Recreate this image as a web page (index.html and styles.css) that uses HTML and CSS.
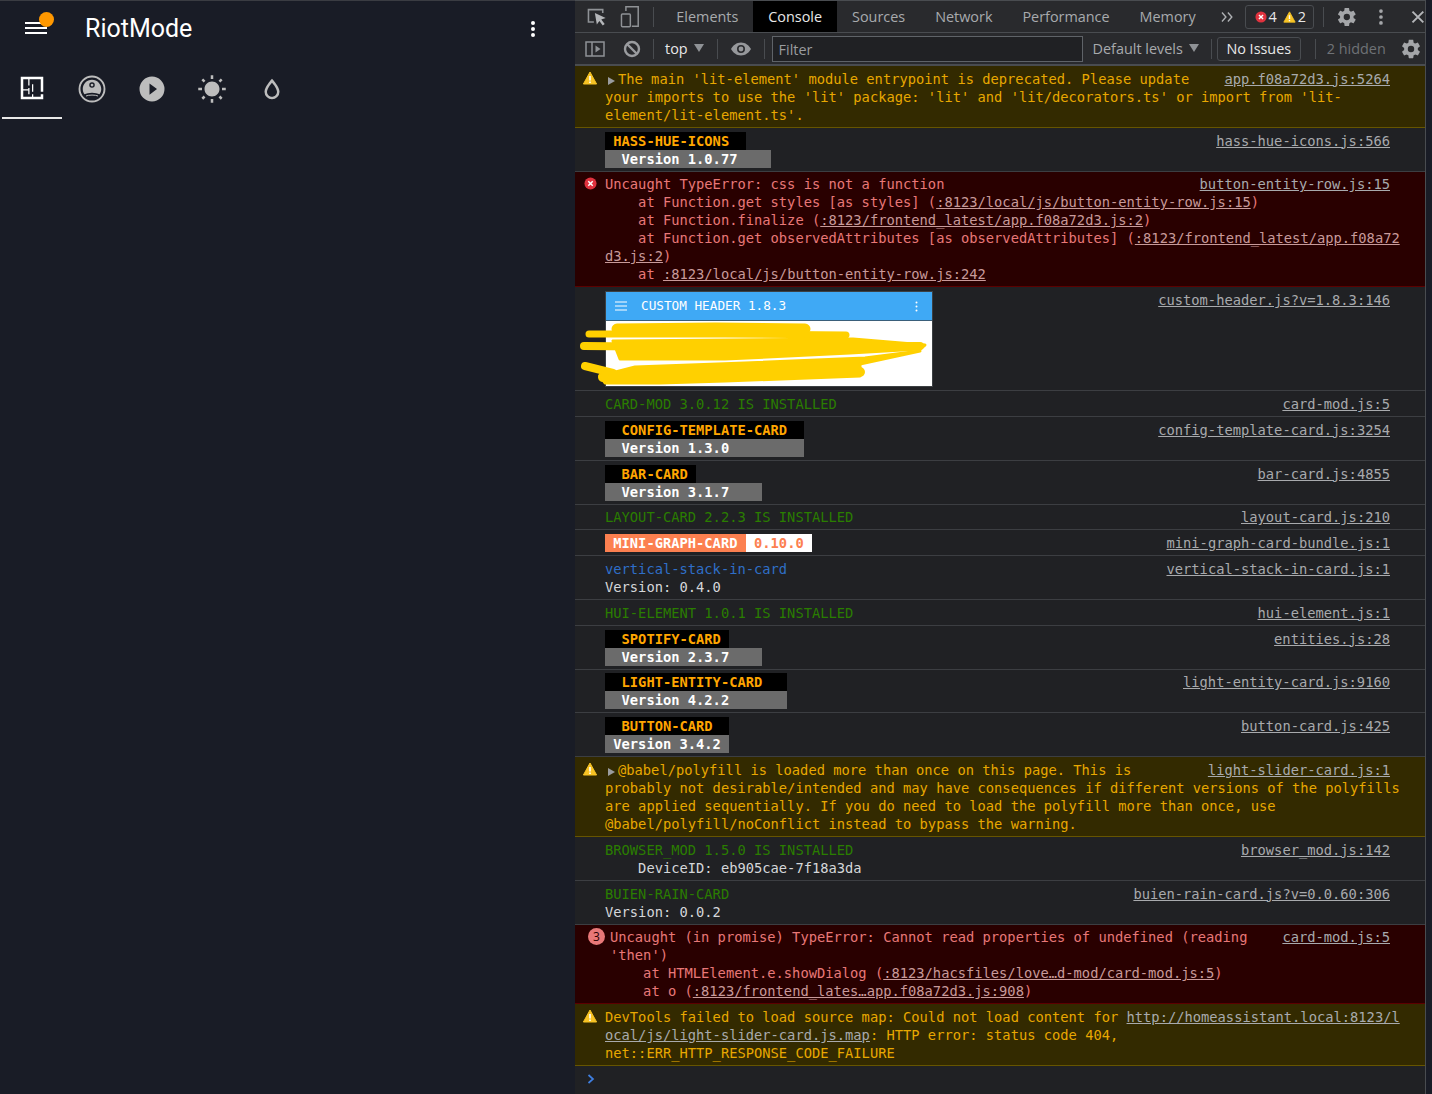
FILE: index.html
```html
<!DOCTYPE html>
<html lang="en">
<head>
	<meta charset="UTF-8">
	<title>RiotMode</title>
	<link rel="stylesheet" href="styles.css">
</head>
<body>
<svg class="defs" width="0" height="0">
	<symbol id="cog" viewBox="0 0 24 24"><path d="M12,15.5A3.5,3.5 0 0,1 8.5,12A3.5,3.5 0 0,1 12,8.5A3.5,3.5 0 0,1 15.5,12A3.5,3.5 0 0,1 12,15.5M19.43,12.97C19.47,12.65 19.5,12.33 19.5,12C19.5,11.67 19.47,11.34 19.43,11L21.54,9.37C21.73,9.22 21.78,8.95 21.66,8.73L19.66,5.27C19.54,5.05 19.27,4.96 19.05,5.05L16.56,6.05C16.04,5.66 15.5,5.32 14.87,5.07L14.5,2.42C14.46,2.18 14.25,2 14,2H10C9.75,2 9.54,2.18 9.5,2.42L9.13,5.07C8.5,5.32 7.96,5.66 7.44,6.05L4.95,5.05C4.73,4.96 4.46,5.05 4.34,5.27L2.34,8.73C2.21,8.95 2.27,9.22 2.46,9.37L4.57,11C4.53,11.34 4.5,11.67 4.5,12C4.5,12.33 4.53,12.65 4.57,12.97L2.46,14.63C2.27,14.78 2.21,15.05 2.34,15.27L4.34,18.73C4.46,18.95 4.73,19.03 4.95,18.95L7.44,17.94C7.96,18.34 8.5,18.68 9.13,18.93L9.5,21.58C9.54,21.82 9.75,22 10,22H14C14.25,22 14.46,21.82 14.5,21.58L14.87,18.93C15.5,18.67 16.04,18.34 16.56,17.94L19.05,18.95C19.27,19.03 19.54,18.95 19.66,18.73L21.66,15.27C21.78,15.05 21.73,14.78 21.54,14.63L19.43,12.97Z"/></symbol>
	<symbol id="warn" viewBox="0 0 14 14"><path d="M7,1 L13.6,13 H0.4 Z" fill="#f7c325" stroke="#f7c325" stroke-linejoin="round"/><path d="M6.2,5 H7.8 V9.4 H6.2 Z M6.2,10.4 H7.8 V12 H6.2 Z" fill="#fff"/></symbol>
	<symbol id="err" viewBox="0 0 14 14"><circle cx="7" cy="7" r="6.5" fill="#e0323e"/><path d="M4.6,4.6 L9.4,9.4 M9.4,4.6 L4.6,9.4" stroke="#fff" stroke-width="1.6"/></symbol>
</svg>

<div class="app">
	<div class="appbar">
		<div class="menu">
			<svg width="24" height="18" viewBox="0 0 24 18"><path d="M1,6 H23 M1,11 H23 M1,16 H23" stroke="#fff" stroke-width="2.2"/></svg>
			<span class="dot"></span>
		</div>
		<div class="title">RiotMode</div>
		<svg class="more" width="24" height="24" viewBox="0 0 24 24"><path fill="#fff" d="M12,16A2,2 0 0,1 14,18A2,2 0 0,1 12,20A2,2 0 0,1 10,18A2,2 0 0,1 12,16M12,10A2,2 0 0,1 14,12A2,2 0 0,1 12,14A2,2 0 0,1 10,12A2,2 0 0,1 12,10M12,4A2,2 0 0,1 14,6A2,2 0 0,1 12,8A2,2 0 0,1 10,6A2,2 0 0,1 12,4Z"/></svg>
	</div>
	<div class="viewtabs">
		<div class="viewtab active"><svg width="30" height="30" viewBox="0 0 24 24"><path fill="#fff" d="M10,5V10H9V5H5V13H9V12H10V17H9V14H5V19H12V17H13V19H19V17H21V21H3V3H21V15H19V10H13V15H12V9H13V10H19V5H10Z"/></svg></div>
		<div class="viewtab"><svg width="30" height="30" viewBox="0 0 24 24"><circle cx="12" cy="12" r="10" fill="none" stroke="#bdbdbd" stroke-width="1.5"/><path fill="#bdbdbd" fill-rule="evenodd" d="M12,4.6C16.2,4.6 19.4,8 19.4,12C19.4,13.6 18.8,15.2 18,16.2C16.6,15.6 14.5,15 12,15C9.5,15 7.4,15.6 6,16.2C5.2,15.2 4.6,13.6 4.6,12C4.6,8 7.8,4.6 12,4.6ZM12,6.6A2.2,2.2 0 0 0 9.8,8.8A2.2,2.2 0 0 0 12,11A2.2,2.2 0 0 0 14.2,8.8A2.2,2.2 0 0 0 12,6.6Z"/><circle cx="12" cy="8.8" r="1.1" fill="#bdbdbd"/><path d="M7.2,17.6C9.4,16.6 14.6,16.6 16.8,17.6" stroke="#bdbdbd" stroke-width="0.8" fill="none"/></svg></div>
		<div class="viewtab"><svg width="30" height="30" viewBox="0 0 24 24"><path fill="#bdbdbd" d="M10,16.5V7.5L16,12M12,2A10,10 0 0,0 2,12A10,10 0 0,0 12,22A10,10 0 0,0 22,12A10,10 0 0,0 12,2Z"/></svg></div>
		<div class="viewtab"><svg width="30" height="30" viewBox="0 0 24 24"><path fill="#bdbdbd" d="M3.55 19.09L4.96 20.5L6.76 18.71L5.34 17.29M12 6C8.69 6 6 8.69 6 12S8.69 18 12 18 18 15.31 18 12C18 8.68 15.31 6 12 6M20 13H23V11H20M17.24 18.71L19.04 20.5L20.45 19.09L18.66 17.29M20.45 5L19.04 3.6L17.24 5.39L18.66 6.81M13 1H11V4H13M6.76 5.39L4.96 3.6L3.55 5L5.34 6.81L6.76 5.39M1 11V13H4V11M13 20H11V23H13"/></svg></div>
		<div class="viewtab"><svg width="30" height="30" viewBox="0 0 24 24"><path fill="#bdbdbd" d="M12,3.77L11.25,4.61C11.25,4.61 9.97,6.06 8.68,7.94C7.39,9.82 6,12.07 6,14.23A6,6 0 0,0 12,20.23A6,6 0 0,0 18,14.23C18,12.07 16.61,9.82 15.32,7.94C14.03,6.06 12.75,4.61 12.75,4.61L12,3.77M12,6.9C12.44,7.42 12.84,7.85 13.68,9.07C14.89,10.83 16,13.07 16,14.23C16,16.45 14.22,18.23 12,18.23C9.78,18.23 8,16.45 8,14.23C8,13.07 9.11,10.83 10.32,9.07C11.16,7.85 11.56,7.42 12,6.9Z"/></svg></div>
	</div>
</div>

<div class="devtools">
	<div class="toolbar top-bar">
		<svg class="tool-inspect" width="22" height="20" viewBox="0 0 22 20"><path d="M8,15 H2.5 V2.5 H17 V6" fill="none" stroke="#8f9296" stroke-width="1.6"/><path d="M9,6 L20,11 L15.5,12.6 L19,17 L17,18.6 L13.6,14 L11,17.6 Z" fill="#b4b6b9"/></svg>
		<svg class="tool-device" width="20" height="24" viewBox="0 0 20 24"><path d="M6,6 V1.5 H18.5 V21.5 H12" fill="none" stroke="#8f9296" stroke-width="1.5"/><rect x="1.5" y="9" width="9" height="13" rx="1" fill="none" stroke="#8f9296" stroke-width="1.5"/></svg>
		<span class="sep sep-tabs"></span>
		<div class="tab">Elements</div>
		<div class="tab selected">Console</div>
		<div class="tab">Sources</div>
		<div class="tab">Network</div>
		<div class="tab">Performance</div>
		<div class="tab">Memory</div>
		<svg class="chevrons" width="12" height="10" viewBox="0 0 12 10"><path d="M1,0.5 L5,5 L1,9.5 M7,0.5 L11,5 L7,9.5" fill="none" stroke="#aeb0b3" stroke-width="1.4"/></svg>
		<div class="counts">
			<svg width="12" height="12"><use href="#err"/></svg><span>4</span>
			<svg class="count-warn" width="13" height="12"><use href="#warn"/></svg><span>2</span>
		</div>
		<span class="sep sep-count"></span>
		<svg class="gear gear-main" width="22" height="22"><use href="#cog"/></svg>
		<svg class="kebab" width="4" height="18" viewBox="0 0 4 18"><circle cx="2" cy="3" r="1.9"/><circle cx="2" cy="9" r="1.9"/><circle cx="2" cy="15" r="1.9"/></svg>
		<svg class="close" width="14" height="14" viewBox="0 0 14 14"><path d="M1.5,1.5 L12.5,12.5 M12.5,1.5 L1.5,12.5" stroke="#b4b6b9" stroke-width="2"/></svg>
	</div>
	<div class="toolbar filter-bar">
		<svg class="tool-dock" width="20" height="18" viewBox="0 0 20 18"><rect x="1" y="2" width="18" height="14" fill="none" stroke="#8f9296" stroke-width="1.5"/><path d="M7,2 V16" stroke="#8f9296" stroke-width="1.5"/><path d="M10.5,5.5 L15.5,9 L10.5,12.5 Z" fill="#8f9296"/></svg>
		<svg class="tool-block" width="18" height="18" viewBox="0 0 18 18"><circle cx="9" cy="9" r="7" fill="none" stroke="#9a9c9f" stroke-width="2.4"/><path d="M4,4 L14,14" stroke="#9a9c9f" stroke-width="2.4"/></svg>
		<span class="sep sep-block"></span>
		<span class="ctx">top</span>
		<span class="caret caret-top"></span>
		<span class="sep sep-ctx"></span>
		<svg class="tool-eye" width="20" height="14" viewBox="0 0 20 14"><path fill="#96989b" fill-rule="evenodd" d="M10,0.5C14.5,0.5 18,3.4 20,7C18,10.6 14.5,13.5 10,13.5C5.5,13.5 2,10.6 0,7C2,3.4 5.5,0.5 10,0.5ZM10,3A4,4 0 1 0 10,11A4,4 0 1 0 10,3Z"/><circle cx="10" cy="7" r="2.4" fill="#96989b"/></svg>
		<span class="sep sep-eye"></span>
		<div class="filter">Filter</div>
		<span class="levels">Default levels</span>
		<span class="caret caret-levels"></span>
		<span class="sep sep-levels"></span>
		<div class="issues">No Issues</div>
		<span class="sep sep-issues"></span>
		<span class="hidden-count">2 hidden</span>
		<svg class="gear gear-filter" width="22" height="22"><use href="#cog"/></svg>
	</div>

	<div class="console">
		<div class="row warning">
			<div class="ico"><svg class="ico-warn" width="14" height="14"><use href="#warn"/></svg></div>
			<div class="msg"><a class="src">app.f08a72d3.js:5264</a><span class="arrow"></span>The main 'lit-element' module entrypoint is deprecated. Please update
your imports to use the 'lit' package: 'lit' and 'lit/decorators.ts' or import from 'lit-
element/lit-element.ts'.</div>
		</div>
		<div class="row">
			<div class="ico"></div>
			<div class="msg"><a class="src">hass-hue-icons.js:566</a><span class="badge name"> HASS-HUE-ICONS  </span>
<span class="badge ver">  Version 1.0.77    </span></div>
		</div>
		<div class="row error">
			<div class="ico"><svg class="ico-err" width="13" height="13"><use href="#err"/></svg></div>
			<div class="msg"><a class="src">button-entity-row.js:15</a>Uncaught TypeError: css is not a function
    at Function.get styles [as styles] (<u>:8123/local/js/button-entity-row.js:15</u>)
    at Function.finalize (<u>:8123/frontend_latest/app.f08a72d3.js:2</u>)
    at Function.get observedAttributes [as observedAttributes] (<u>:8123/frontend_latest/app.f08a72
d3.js:2</u>)
    at <u>:8123/local/js/button-entity-row.js:242</u></div>
		</div>
		<div class="row row-image">
			<div class="ico"></div>
			<div class="msg"><a class="src">custom-header.js?v=1.8.3:146</a><div class="shot">
				<div class="shot-head">
					<svg width="12" height="10" viewBox="0 0 12 10"><path d="M0,1 H12 M0,5 H12 M0,9 H12" stroke="#fff" stroke-width="1.2"/></svg>
					<span class="shot-title">CUSTOM HEADER 1.8.3</span>
					<svg class="shot-more" width="3" height="11" viewBox="0 0 3 11"><circle cx="1.5" cy="1.5" r="1" fill="#fff"/><circle cx="1.5" cy="5.5" r="1" fill="#fff"/><circle cx="1.5" cy="9.5" r="1" fill="#fff"/></svg>
				</div>
				<div class="shot-body"></div>
				<svg class="scribble" width="360" height="70" viewBox="0 0 360 70">
					<path d="M42,10 L140,9 L230,10" stroke-width="11"/>
					<path d="M14,15 L150,15 L271,16" stroke-width="7"/>
					<path d="M9,27 L120,28 L345,27" stroke-width="8"/>
					<path class="fill" d="M38,22 L278,20 L350,26 L345,30 L275,34 L150,40 L45,40 Z"/>
					<path d="M10,47 L38,54" stroke-width="8"/>
					<path d="M28,58 L90,56 L285,53" stroke-width="10"/>
					<path class="fill" d="M60,48 L170,44 L290,39 L345,32 L285,45 L285,57 L150,62 L85,64 L30,64 L25,57 Z"/>
				</svg>
			</div></div>
		</div>
		<div class="row">
			<div class="ico"></div>
			<div class="msg green"><a class="src">card-mod.js:5</a>CARD-MOD 3.0.12 IS INSTALLED</div>
		</div>
		<div class="row">
			<div class="ico"></div>
			<div class="msg"><a class="src">config-template-card.js:3254</a><span class="badge name">  CONFIG-TEMPLATE-CARD  </span>
<span class="badge ver">  Version 1.3.0         </span></div>
		</div>
		<div class="row">
			<div class="ico"></div>
			<div class="msg"><a class="src">bar-card.js:4855</a><span class="badge name">  BAR-CARD </span>
<span class="badge ver">  Version 3.1.7    </span></div>
		</div>
		<div class="row">
			<div class="ico"></div>
			<div class="msg green"><a class="src">layout-card.js:210</a>LAYOUT-CARD 2.2.3 IS INSTALLED</div>
		</div>
		<div class="row">
			<div class="ico"></div>
			<div class="msg"><a class="src">mini-graph-card-bundle.js:1</a><span class="badge mini"> MINI-GRAPH-CARD </span><span class="badge mini-ver"> 0.10.0 </span></div>
		</div>
		<div class="row">
			<div class="ico"></div>
			<div class="msg"><a class="src">vertical-stack-in-card.js:1</a><b class="blue">vertical-stack-in-card</b>
Version: 0.4.0</div>
		</div>
		<div class="row">
			<div class="ico"></div>
			<div class="msg green"><a class="src">hui-element.js:1</a>HUI-ELEMENT 1.0.1 IS INSTALLED</div>
		</div>
		<div class="row">
			<div class="ico"></div>
			<div class="msg"><a class="src">entities.js:28</a><span class="badge name">  SPOTIFY-CARD </span>
<span class="badge ver">  Version 2.3.7    </span></div>
		</div>
		<div class="row">
			<div class="ico"></div>
			<div class="msg"><a class="src">light-entity-card.js:9160</a><span class="badge name">  LIGHT-ENTITY-CARD   </span>
<span class="badge ver">  Version 4.2.2       </span></div>
		</div>
		<div class="row">
			<div class="ico"></div>
			<div class="msg"><a class="src">button-card.js:425</a><span class="badge name">  BUTTON-CARD  </span>
<span class="badge ver"> Version 3.4.2 </span></div>
		</div>
		<div class="row warning">
			<div class="ico"><svg class="ico-warn" width="14" height="14"><use href="#warn"/></svg></div>
			<div class="msg"><a class="src">light-slider-card.js:1</a><span class="arrow"></span>@babel/polyfill is loaded more than once on this page. This is
probably not desirable/intended and may have consequences if different versions of the polyfills
are applied sequentially. If you do need to load the polyfill more than once, use
@babel/polyfill/noConflict instead to bypass the warning.</div>
		</div>
		<div class="row">
			<div class="ico"></div>
			<div class="msg"><a class="src">browser_mod.js:142</a><span class="green">BROWSER_MOD 1.5.0 IS INSTALLED</span>
    DeviceID: eb905cae-7f18a3da</div>
		</div>
		<div class="row">
			<div class="ico"></div>
			<div class="msg"><a class="src">buien-rain-card.js?v=0.0.60:306</a><span class="green">BUIEN-RAIN-CARD</span>
Version: 0.0.2</div>
		</div>
		<div class="row error">
			<div class="ico"><span class="repeat">3</span></div>
			<div class="msg msg-repeat"><a class="src">card-mod.js:5</a>Uncaught (in promise) TypeError: Cannot read properties of undefined (reading
'then')
    at HTMLElement.e.showDialog (<u>:8123/hacsfiles/love…d-mod/card-mod.js:5</u>)
    at o (<u>:8123/frontend_lates…app.f08a72d3.js:908</u>)</div>
		</div>
		<div class="row warning">
			<div class="ico"><svg class="ico-warn" width="14" height="14"><use href="#warn"/></svg></div>
			<div class="msg">DevTools failed to load source map: Could not load content for <u>http://homeassistant.local:8123/l
ocal/js/light-slider-card.js.map</u>: HTTP error: status code 404,
net::ERR_HTTP_RESPONSE_CODE_FAILURE</div>
		</div>
		<div class="prompt">
			<svg width="8" height="10" viewBox="0 0 8 10"><path d="M1.5,1 L6,5 L1.5,9" fill="none" stroke="#3f7fe0" stroke-width="1.7"/></svg>
		</div>
	</div>
</div>
</body>
</html>
```

FILE: styles.css
```css
html, body{
	margin:0;
	height:100%;
}
body{
	display:flex;
	align-items:stretch;
	height:1094px;
	overflow:hidden;
	background-color:#191c26;
	font-family:"Open Sans", sans-serif;
}
.defs{
	position:absolute;
}

/* left side, the home assistant panel */
.app{
	width:575px;
	flex:none;
	border-top:1px solid #3a3c42;
	box-sizing:border-box;
}
.appbar{
	display:flex;
	align-items:center;
	height:56px;
	padding-left:24px;
	color:#fff;
}
.menu{
	position:relative;
	width:24px;
	height:24px;
	margin-top:-1px;
}
.dot{
	position:absolute;
	top:-5px;
	left:15px;
	width:15px;
	height:15px;
	border-radius:50%;
	background-color:#ff9800;
}
.title{
	margin-left:37px;
	font-family:Roboto, sans-serif;
	font-size:25px;
	line-height:56px;
}
.more{
	margin-left:auto;
	margin-right:30px;
}
.viewtabs{
	display:flex;
	margin-left:2px;
	margin-top:3px;
}
.viewtab{
	width:60px;
	height:59px;
	display:flex;
	align-items:center;
	justify-content:center;
	box-sizing:border-box;
	padding-bottom:2px;
}
.viewtab.active{
	border-bottom:2px solid #e8e8e8;
}

/* devtools */
.devtools{
	width:851px;
	flex:none;
	background-color:#202124;
	border-right:1px solid #494c50;
	box-sizing:border-box;
	display:flex;
	flex-direction:column;
}
.toolbar{
	display:flex;
	align-items:center;
	background-color:#292a2d;
	border-bottom:1px solid #494c50;
	box-sizing:border-box;
	flex:none;
	color:#a8aaad;
	font-size:14.4px;
}
.top-bar{
	height:33px;
	border-top:1px solid #494c50;
}
.filter-bar{
	height:33px;
	border-bottom:2px solid #494c50;
}
.sep{
	width:1px;
	height:20px;
	background-color:#494c50;
	flex:none;
}
.tab{
	padding:0 15px;
	height:31px;
	line-height:31px;
}
.tab.selected{
	background-color:#000;
	color:#e8e8e8;
}
.tool-inspect{
	margin-left:11px;
}
.tool-device{
	margin-left:12px;
}
.sep-tabs{
	margin-left:14px;
	margin-right:7px;
}
.chevrons{
	margin-left:10px;
}
.counts{
	display:flex;
	align-items:center;
	width:70px;
	height:24px;
	margin-left:12px;
	box-sizing:border-box;
	border:1px solid #494c50;
	border-radius:3px;
	padding-left:9px;
	color:#e8e8e8;
}
.counts span{
	margin-left:2px;
}
.count-warn{
	margin-left:6px;
}
.sep-count{
	margin-left:9px;
}
.gear{
	fill:#a4a6a9;
}
.gear-main{
	margin-left:12px;
}
.kebab{
	margin-left:22px;
	fill:#a4a6a9;
}
.close{
	margin-left:28px;
}
.tool-dock{
	margin-left:10px;
}
.tool-block{
	margin-left:18px;
}
.sep-block{
	margin-left:12px;
}
.ctx{
	margin-left:11px;
	color:#e8e8e8;
}
.caret{
	width:0;
	height:0;
	border-left:5px solid transparent;
	border-right:5px solid transparent;
	border-top:8px solid #8f9296;
	margin-top:-2px;
}
.caret-top{
	margin-left:6px;
}
.sep-ctx{
	margin-left:13px;
}
.tool-eye{
	margin-left:13px;
}
.sep-eye{
	margin-left:13px;
}
.filter{
	width:311px;
	height:26px;
	line-height:26px;
	margin-left:7px;
	padding-left:6px;
	box-sizing:border-box;
	border:1px solid #5f6368;
	background-color:#202124;
	color:#9a9c9f;
}
.levels{
	margin-left:10px;
}
.caret-levels{
	margin-left:6px;
}
.sep-levels{
	margin-left:12px;
}
.issues{
	width:84px;
	height:24px;
	line-height:22px;
	margin-left:5px;
	box-sizing:border-box;
	text-align:center;
	border:1px solid #494c50;
	border-radius:3px;
	color:#e8e8e8;
}
.sep-issues{
	margin-left:14px;
}
.hidden-count{
	margin-left:11px;
	color:#6f7276;
}
.gear-filter{
	margin-left:14px;
}

.console{
	flex:1;
	font-family:"DejaVu Sans Mono", monospace;
	font-size:13.75px;
	line-height:18px;
	color:#d5d7da;
}
.row{
	display:flex;
	padding:3.8px 0 3px 0;
	border-bottom:1px solid #3c3e42;
}
.ico{
	width:30px;
	flex:none;
	position:relative;
}
.ico-warn{
	display:block;
	margin:1px 0 0 8px;
}
.ico-err{
	display:block;
	margin:2px 0 0 9px;
}
.msg{
	flex:1;
	white-space:pre;
	min-width:0;
}
.src{
	float:right;
	margin-right:35px;
	color:#a8aaad;
	text-decoration:underline;
}
.warning{
	background-color:#332a00;
	border-bottom-color:#665500;
}
.warning .msg{
	color:#e8a800;
}
.warning u, .error u{
	color:#a8aaad;
}
.error{
	background-color:#290000;
	border-bottom-color:#5c0000;
}
.error .msg{
	color:#e87878;
}
.error u{
	color:#c89a9a;
}
.green{
	color:#2a7d00;
}
.blue{
	color:#2f6fc8;
	font-weight:normal;
}
.arrow{
	display:inline-block;
	width:0;
	height:0;
	border-left:7px solid #9a9c9f;
	border-top:4px solid transparent;
	border-bottom:4px solid transparent;
	margin:0 3px 0 3px;
	vertical-align:-1px;
}
.badge{
	display:inline-block;
	font-weight:bold;
	height:18px;
}
.name{
	background-color:#000;
	color:#ffa600;
}
.ver{
	background-color:#6b6b6b;
	color:#fff;
}
.mini{
	background-color:#fc8050;
	color:#fff;
}
.mini-ver{
	background-color:#fff;
	color:#fc8050;
}
.repeat{
	display:block;
	width:17px;
	height:17px;
	margin-left:13px;
	border-radius:50%;
	background-color:#e87878;
	color:#290000;
	text-align:center;
	line-height:17px;
	font-size:12px;
	font-family:"Open Sans", sans-serif;
}
.msg-repeat{
	padding-left:5px;
}
.prompt{
	padding:4px 0 0 12px;
}

/* the screenshot inside the console */
.shot{
	position:relative;
	display:inline-block;
	vertical-align:top;
	width:328px;
	height:96px;
	box-sizing:border-box;
	border:1px solid #3c4043;
	white-space:normal;
}
.shot-head{
	display:flex;
	align-items:center;
	height:29px;
	padding-left:9px;
	padding-right:14px;
	box-sizing:border-box;
	background-color:#3fa9f5;
	border-bottom:1px solid #3a5f7a;
	color:#fff;
}
.shot-title{
	margin-left:14px;
	font-size:12.7px;
}
.shot-more{
	margin-left:auto;
}
.shot-body{
	height:65px;
	background-color:#fff;
}
.scribble{
	position:absolute;
	left:-31px;
	top:27px;
	overflow:visible;
}
.scribble path{
	fill:none;
	stroke:#ffd000;
	stroke-linecap:round;
	stroke-linejoin:round;
}
.scribble .fill{
	fill:#ffd000;
	stroke-width:3;
}
```
